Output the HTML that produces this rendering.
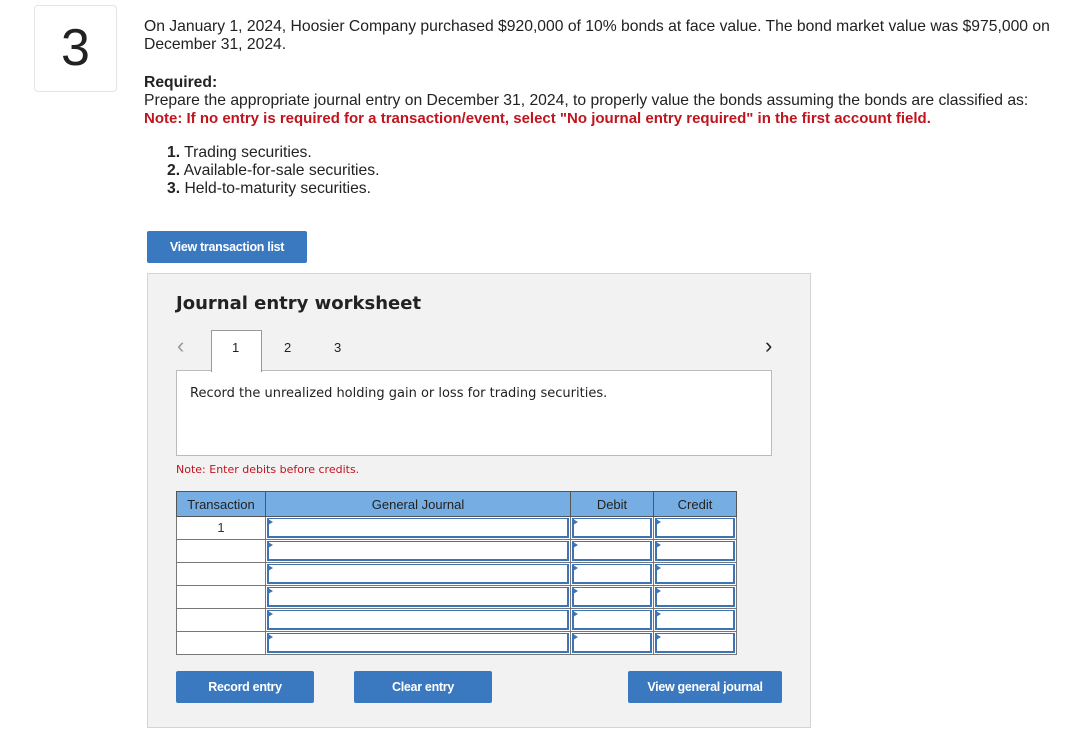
<!DOCTYPE html>
<html><head><style>
*{margin:0;padding:0;box-sizing:border-box}
body{width:1089px;height:740px;background:#fff;font-family:"Liberation Sans",Arial,sans-serif;color:#333;position:relative;overflow:hidden}
.a{position:absolute}
.num{left:34px;top:5px;width:83px;height:87px;border:1px solid #e4e4e4;border-radius:4px;font-size:52px;color:#222;text-align:center;line-height:84px}
.t{font-size:15.7px;color:#222;line-height:18px}
.dv{font-family:"DejaVu Sans",Verdana,sans-serif}
.btn{background:#3a78c0;color:#fff;font-size:12.5px;font-weight:bold;text-align:center;border-radius:2px;letter-spacing:-0.3px}
.ws{left:147px;top:273px;width:664px;height:455px;background:#f2f2f2;border:1px solid #d4d4d4}
table{border-collapse:collapse;position:absolute;left:176px;top:491px}
td,th{border:1px solid #777;padding:0;height:23px;font-size:13px}
th{background:#76aee3;color:#222;font-weight:normal;height:25px;border-color:#555}
td{background:#fff}
td.i{position:relative}
td.i:after{content:"";position:absolute;left:1px;top:1px;right:1px;bottom:1px;border:2px solid #3e74b6;border-top-width:1px}
td.i:before{content:"";position:absolute;left:2px;top:2px;border-left:5px solid #3e74b6;border-top:3px solid transparent;border-bottom:3px solid transparent;z-index:2}
</style></head><body>
<div class="a num">3</div>
<div class="a t" style="left:144px;top:18px;width:935px">On January 1, 2024, Hoosier Company purchased $920,000 of 10% bonds at face value. The bond market value was $975,000 on December 31, 2024.</div>
<div class="a t" style="left:144px;top:74px;font-weight:bold">Required:</div>
<div class="a t" style="left:144px;top:92px">Prepare the appropriate journal entry on December 31, 2024, to properly value the bonds assuming the bonds are classified as:</div>
<div class="a t" style="left:144px;top:110px;color:#c0141e;font-weight:bold;font-size:15px">Note: If no entry is required for a transaction/event, select "No journal entry required" in the first account field.</div>
<div class="a t" style="left:167px;top:144px"><b>1.</b> Trading securities.<br><b>2.</b> Available-for-sale securities.<br><b>3.</b> Held-to-maturity securities.</div>
<div class="a btn" style="left:147px;top:231px;width:160px;height:32px;line-height:32px">View transaction list</div>
<div class="a ws"></div>
<div class="a dv" style="left:176px;top:293px;font-size:18px;font-weight:bold;color:#222">Journal entry worksheet</div>
<div class="a" style="left:177px;top:333px;font-size:22px;color:#999">&#8249;</div>
<div class="a" style="left:765px;top:333px;font-size:22px;color:#222">&#8250;</div>
<div class="a" style="left:176px;top:370px;width:596px;height:86px;background:#fff;border:1px solid #bbb"></div>
<div class="a" style="left:211px;top:330px;width:51px;height:42px;background:#fff;border:1px solid #999;border-bottom:none"></div>
<div class="a" style="left:232px;top:340px;font-size:13px;color:#222">1</div>
<div class="a" style="left:284px;top:340px;font-size:13px;color:#222">2</div>
<div class="a" style="left:334px;top:340px;font-size:13px;color:#222">3</div>
<div class="a dv" style="left:190px;top:386px;font-size:13px;color:#222">Record the unrealized holding gain or loss for trading securities.</div>
<div class="a dv" style="left:176px;top:463px;font-size:11px;color:#c0141e">Note: Enter debits before credits.</div>
<table>
<tr><th style="width:89px">Transaction</th><th style="width:305px">General Journal</th><th style="width:83px">Debit</th><th style="width:83px">Credit</th></tr>
<tr><td style="text-align:center;vertical-align:top;padding-top:3px">1</td><td class="i"></td><td class="i"></td><td class="i"></td></tr>
<tr><td></td><td class="i"></td><td class="i"></td><td class="i"></td></tr>
<tr><td></td><td class="i"></td><td class="i"></td><td class="i"></td></tr>
<tr><td></td><td class="i"></td><td class="i"></td><td class="i"></td></tr>
<tr><td></td><td class="i"></td><td class="i"></td><td class="i"></td></tr>
<tr><td></td><td class="i"></td><td class="i"></td><td class="i"></td></tr>
</table>
<div class="a btn" style="left:176px;top:671px;width:138px;height:32px;line-height:32px">Record entry</div>
<div class="a btn" style="left:354px;top:671px;width:138px;height:32px;line-height:32px">Clear entry</div>
<div class="a btn" style="left:628px;top:671px;width:154px;height:32px;line-height:32px">View general journal</div>
</body></html>
